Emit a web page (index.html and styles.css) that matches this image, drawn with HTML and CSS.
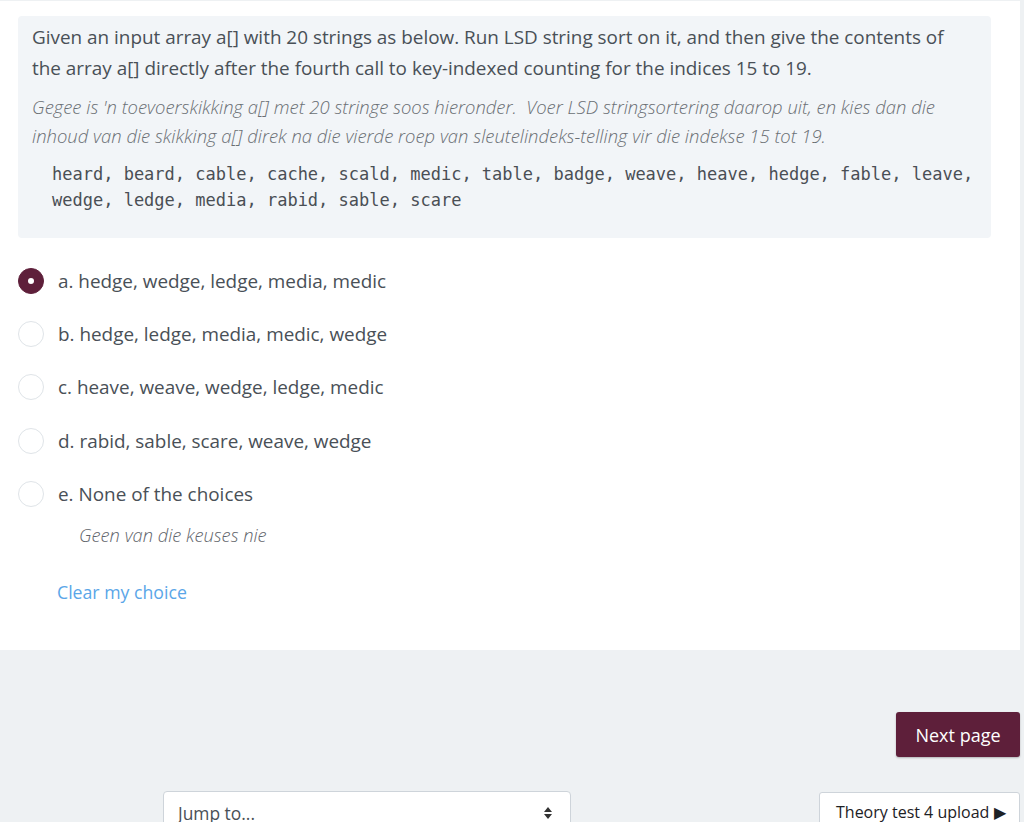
FILE: index.html
```html
<!DOCTYPE html>
<html lang="en">
<head>
  <meta charset="UTF-8" />
  <meta name="viewport" content="width=device-width, initial-scale=1.0"/>
  <title>Quiz</title>
  <link rel="stylesheet" href="styles.css">
</head>
<body>
  <div class="pagina">
    <div class="pregunta">
      <div class="formulacion">
        <p class="enunciado">Given an input array a[] with 20 strings as below. Run LSD string sort on it, and then give the contents of the array a[] directly after the fourth call to key-indexed counting for the indices 15 to 19.</p>
        <p class="traduccion">Gegee is 'n toevoerskikking a[] met 20 stringe soos hieronder.&nbsp; Voer LSD stringsortering daarop uit, en kies dan die inhoud van die skikking a[] direk na die vierde roep van sleutelindeks-telling vir die indekse 15 tot 19.</p>
        <pre class="datos">heard, beard, cable, cache, scald, medic, table, badge, weave, heave, hedge, fable, leave,
wedge, ledge, media, rabid, sable, scare</pre>
      </div>

      <div class="opciones">
        <label class="opcion">
          <span class="radio activa"></span>
          <span>a. hedge, wedge, ledge, media, medic</span>
        </label>
        <label class="opcion">
          <span class="radio"></span>
          <span>b. hedge, ledge, media, medic, wedge</span>
        </label>
        <label class="opcion">
          <span class="radio"></span>
          <span>c. heave, weave, wedge, ledge, medic</span>
        </label>
        <label class="opcion">
          <span class="radio"></span>
          <span>d. rabid, sable, scare, weave, wedge</span>
        </label>
        <label class="opcion">
          <span class="radio"></span>
          <span>e. None of the choices</span>
        </label>
        <div class="nota">Geen van die keuses nie</div>
      </div>

      <a href="#" class="limpiar">Clear my choice</a>
    </div>

    <div class="navegacion">
      <button class="btn-siguiente">Next page</button>
    </div>

    <div class="pie">
      <div class="selector">
        <span>Jump to...</span>
        <svg width="10" height="16" viewBox="0 0 10 16"><path d="M5 2 L9 7 H1 Z M5 14 L9 9 H1 Z" fill="#333"/></svg>
      </div>
      <a href="#" class="btn-enlace">Theory test 4 upload &#9654;</a>
    </div>
  </div>
</body>
</html>
```

FILE: styles.css
```css
body {
  margin: 0;
  background-color: #eef1f3;
  font-family: 'Open Sans', sans-serif;
  color: #495057;
}

.pagina {
  width: 1020px;
}

.pregunta {
  background-color: #fff;
  margin-top: 1px;
  padding: 15px 29px 46px 18px;
}

.formulacion {
  background-color: #f2f5f8;
  border-radius: 4px;
  padding: 6px 30px 25px 14px;
}

.enunciado {
  margin: 0;
  font-size: 18.9px;
  line-height: 31px;
}

.traduccion {
  margin: 8px 0 0;
  font-size: 18.45px;
  line-height: 29px;
  font-style: italic;
  font-weight: 300;
  color: #6a6f74;
}

.datos {
  margin: 11px -16px 0 20px;
  font-family: 'DejaVu Sans Mono', monospace;
  font-size: 17px;
  line-height: 26px;
  color: #4a4f55;
}

.opciones {
  margin-top: 16px;
}

.opcion {
  display: flex;
  align-items: center;
  gap: 14px;
  height: 53.3px;
  font-size: 18.9px;
}

.radio {
  width: 24px;
  height: 24px;
  border: 1.5px solid #dfe4e8;
  border-radius: 50%;
  background-color: #fff;
  display: flex;
  justify-content: center;
  align-items: center;
}

.radio.activa {
  background-color: #5e1f3a;
  border-color: #5e1f3a;
}

.radio.activa::after {
  content: "";
  width: 6px;
  height: 6px;
  border-radius: 50%;
  background-color: #fff;
}

.nota {
  margin: 2px 0 0 61px;
  font-size: 18.3px;
  font-style: italic;
  font-weight: 300;
  color: #5f656b;
}

.limpiar {
  display: inline-block;
  margin: 33px 0 0 39px;
  font-size: 17.7px;
  color: #5aa6e8;
  text-decoration: none;
}

.navegacion {
  display: flex;
  justify-content: flex-end;
  padding-top: 62px;
}

.btn-siguiente {
  background-color: #5e1f3a;
  color: #fff;
  font-family: 'Open Sans', sans-serif;
  font-size: 18px;
  white-space: nowrap;
  border: none;
  border-radius: 3px;
  height: 45px;
  width: 124px;
  box-shadow: 0 1px 2px rgba(0, 0, 0, 0.25);
}

.pie {
  display: flex;
  justify-content: space-between;
  align-items: flex-start;
  padding: 34px 0 0 163px;
}

.selector {
  width: 408px;
  height: 44px;
  box-sizing: border-box;
  background-color: #fff;
  border: 1px solid #ced4da;
  border-radius: 4px;
  padding: 0 17px 0 14px;
  display: flex;
  justify-content: space-between;
  align-items: center;
  font-size: 17.4px;
  color: #495057;
}

.btn-enlace {
  margin-top: 1px;
  width: 201px;
  height: 44px;
  box-sizing: border-box;
  background-color: #fff;
  border: 1px solid #ced4da;
  border-radius: 3px;
  padding: 8px 0 0 16px;
  font-size: 16px;
  color: #1d2125;
  text-decoration: none;
}
```
